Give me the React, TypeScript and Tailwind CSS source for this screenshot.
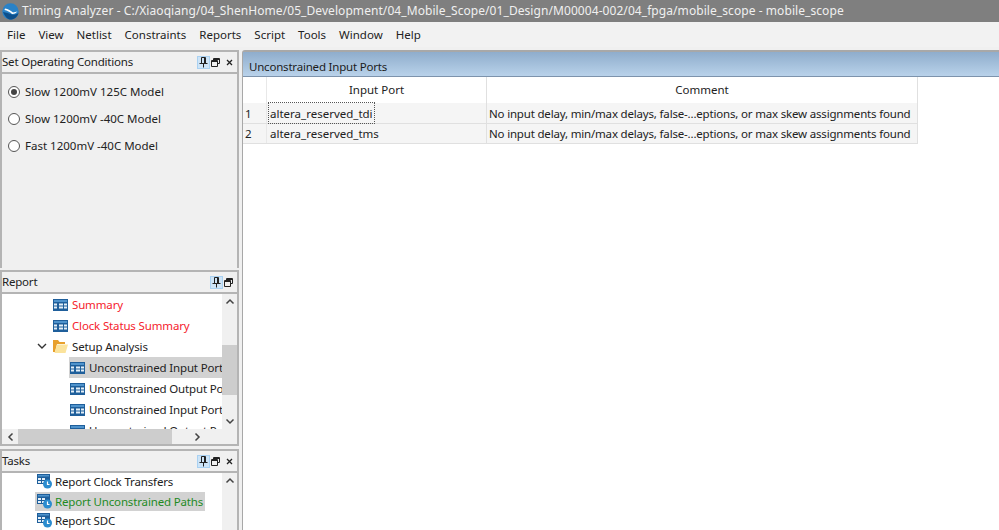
import React from "react";

const font = { fontFamily: '"Noto Sans", Lato, sans-serif' };

function TableIcon() {
  return (
    <svg width="15" height="12" viewBox="0 0 15 12">
      <rect x="0" y="0" width="15" height="12" fill="#1f5f9b" />
      <rect x="1" y="1" width="13" height="2" fill="#4f93cc" />
      {[4.5, 7.5].map((y) =>
        [1, 6, 11].map((x) => <rect key={`${x}-${y}`} x={x} y={y} width={x === 6 ? 4 : 3} height="2" fill="#e4eff8" />)
      )}
    </svg>
  );
}

function TaskIcon() {
  return (
    <svg width="15" height="15" viewBox="0 0 15 15">
      <rect x="0" y="0" width="13" height="10" fill="#1f5f9b" />
      <rect x="1" y="1" width="11" height="1.5" fill="#4f93cc" />
      <rect x="1" y="4" width="3" height="2" fill="#e4eff8" />
      <rect x="5" y="4" width="3" height="2" fill="#e4eff8" />
      <rect x="1" y="7" width="3" height="2" fill="#e4eff8" />
      <rect x="5" y="7" width="3" height="2" fill="#e4eff8" />
      <circle cx="10.5" cy="10" r="4.5" fill="#2b8ccf" />
      <path d="M10.5 7.5V10.5H12.5" stroke="#fff" strokeWidth="1.2" fill="none" />
    </svg>
  );
}

function FolderIcon() {
  return (
    <svg width="15" height="13" viewBox="0 0 15 13">
      <path d="M0 0H5L6.5 2H12V4H4L2 12H0Z" fill="#e8a02c" />
      <path d="M4 4.5H15L12.5 13H1.5Z" fill="#fbe39c" />
    </svg>
  );
}

function PaneButtons({ close = true }: { close?: boolean }) {
  return (
    <div className="flex items-center gap-[1px]">
      <div className="flex h-[13px] w-[13px] items-center justify-center border border-[#a9d1f2] bg-[#cde4f7]">
        <svg width="9" height="11" viewBox="0 0 9 11">
          <path d="M2.5 .5H6.5V6.5H2.5ZM.5 6.5H8.5M4.5 6.5V10.5M5.5 1V6" stroke="#222" strokeWidth="1" fill="none" />
        </svg>
      </div>
      <svg width="9" height="9" viewBox="0 0 9 9">
        <path d="M2.5 2.5V.5H8.5V5.5H6.5M.5 2.5H6.5V8.5H.5Z M2.5 1.5H8 M.5 3.5H6" stroke="#222" strokeWidth="1" fill="none" />
      </svg>
      {close && (
        <svg width="7" height="7" viewBox="0 0 7 7" className="ml-[5px]">
          <path d="M1 1L6 6M6 1L1 6" stroke="#222" strokeWidth="1.3" />
        </svg>
      )}
    </div>
  );
}

function PaneHeader({ title, close = true }: { title: string; close?: boolean }) {
  return (
    <div className="flex h-[22px] shrink-0 items-center justify-between border-b-2 border-[#b4b4b4] bg-[#f0f0f0] pr-[4px]">
      <span className="text-[11.5px] tracking-[-0.2px] text-[#222]">{title}</span>
      <PaneButtons close={close} />
    </div>
  );
}

function Chevron({ d }: { d: string }) {
  return (
    <svg width="10" height="7" viewBox="0 0 10 7">
      <path d={d} stroke="#444" strokeWidth="1.5" fill="none" />
    </svg>
  );
}

function Radio({ label, on = false }: { label: string; on?: boolean }) {
  return (
    <div className="flex h-[27px] items-center gap-[5px] pl-[6px]">
      <div className="flex h-[12px] w-[12px] items-center justify-center rounded-full border border-[#555] bg-white">
        {on && <div className="h-[6px] w-[6px] rounded-full bg-[#444]" />}
      </div>
      <span className="text-[11.5px] text-[#222]">{label}</span>
    </div>
  );
}

function TreeRow({
  label,
  color = "text-[#222]",
  indent,
  icon,
  selected = false,
}: {
  label: string;
  color?: string;
  indent: string;
  icon: React.ReactNode;
  selected?: boolean;
}) {
  return (
    <div className={`flex h-[21px] shrink-0 items-center whitespace-nowrap ${indent}`}>
      <div className={`flex h-[21px] grow items-center gap-[4px] overflow-hidden pl-[1px] ${selected ? "bg-[#d2d2d2]" : ""}`}>
        <span className="flex w-[15px] shrink-0 items-center">{icon}</span>
        <span className={`text-[11.5px] tracking-[-0.15px] ${color}`}>{label}</span>
      </div>
    </div>
  );
}

function TaskRow({ label, color = "text-[#222]", selected = false }: { label: string; color?: string; selected?: boolean }) {
  return (
    <div className="flex h-[19.5px] shrink-0 items-center pl-[33px]">
      <div className={`flex h-[19px] items-center gap-[3px] whitespace-nowrap pl-[2px] pr-[2px] ${selected ? "bg-[#d2d2d2]" : ""}`}>
        <TaskIcon />
        <span className={`text-[11.5px] tracking-[-0.15px] ${color}`}>{label}</span>
      </div>
    </div>
  );
}

function VScrollbar({ children }: { children: React.ReactNode }) {
  return <div className="flex w-[15px] shrink-0 flex-col items-center bg-[#f0f0f0]">{children}</div>;
}

export default function App() {
  return (
    <div style={font} className="flex h-[530px] w-[999px] flex-col overflow-hidden bg-[#f0f0f0]">
      <div className="flex h-[22px] shrink-0 items-center gap-[3px] bg-[#7f7f7f] pl-[2px]">
        <svg width="17" height="17" viewBox="0 0 17 17">
          <circle cx="8.5" cy="8.5" r="8.2" fill="#2a82c7" />
          <path d="M1 9C3 14 6 16.5 8.5 16.5C12.5 16.5 15.5 14 16.5 10C14 11.5 12 12 10 11.5C7 10.5 4 9.5 1 9Z" fill="#0d4f8b" />
          <path d="M3 5.5C6 6 9 7.5 11 9.6L15.5 8.6C13.5 10.6 11.5 11.4 10 11C8 9 5 7.5 2.5 7Z" fill="#fff" />
        </svg>
        <span className="text-[12px] tracking-[0.07px] text-[#f0f0f0]">
          Timing Analyzer - C:/Xiaoqiang/04_ShenHome/05_Development/04_Mobile_Scope/01_Design/M00004-002/04_fpga/mobile_scope - mobile_scope
        </span>
      </div>

      <div className="flex h-[25px] shrink-0 items-center gap-[13px] bg-[#f2f2f2] pl-[7px] text-[11.5px] text-[#222]">
        {["File", "View", "Netlist", "Constraints", "Reports", "Script", "Tools", "Window", "Help"].map((m) => (
          <span key={m}>{m}</span>
        ))}
      </div>

      <div className="flex min-h-0 grow gap-[3px] pt-[3px]">
        <div className="flex w-[239px] shrink-0 flex-col gap-[2px]">
          <div className="flex h-[218px] shrink-0 flex-col border-2 border-b-0 border-[#b4b4b4]">
            <PaneHeader title="Set Operating Conditions" />
            <div className="grow bg-[#f0f0f0] pt-[4px]">
              <Radio label="Slow 1200mV 125C Model" on />
              <Radio label="Slow 1200mV -40C Model" />
              <Radio label="Fast 1200mV -40C Model" />
            </div>
          </div>

          <div className="flex h-[176px] shrink-0 flex-col border-2 border-[#b4b4b4]">
            <PaneHeader title="Report" close={false} />
            <div className="flex min-h-0 grow bg-white">
              <div className="flex min-w-0 grow flex-col overflow-hidden">
                <TreeRow indent="pl-[50px]" label="Summary" color="text-[#f5222d]" icon={<TableIcon />} />
                <TreeRow indent="pl-[50px]" label="Clock Status Summary" color="text-[#f5222d]" icon={<TableIcon />} />
                <div className="flex h-[21px] shrink-0 items-center pl-[35px]">
                  <svg width="10" height="7" viewBox="0 0 10 7" className="mr-[6px]">
                    <path d="M1 1L5 5L9 1" stroke="#333" strokeWidth="1.4" fill="none" />
                  </svg>
                  <div className="flex items-center gap-[4px]">
                    <FolderIcon />
                    <span className="text-[11.5px] tracking-[-0.15px] text-[#222]">Setup Analysis</span>
                  </div>
                </div>
                <TreeRow indent="pl-[67px]" label="Unconstrained Input Ports" icon={<TableIcon />} selected />
                <TreeRow indent="pl-[67px]" label="Unconstrained Output Ports" icon={<TableIcon />} />
                <TreeRow indent="pl-[67px]" label="Unconstrained Input Ports" icon={<TableIcon />} />
                <TreeRow indent="pl-[67px]" label="Unconstrained Output Ports" icon={<TableIcon />} />
              </div>
              <VScrollbar>
                <div className="flex h-[15px] shrink-0 items-center justify-center">
                  <Chevron d="M1.5 5.5L5 2L8.5 5.5" />
                </div>
                <div className="mt-[36px] h-[50px] w-full shrink-0 bg-[#cdcdcd]" />
                <div className="grow" />
                <div className="flex h-[15px] shrink-0 items-center justify-center">
                  <Chevron d="M1.5 1.5L5 5L8.5 1.5" />
                </div>
              </VScrollbar>
            </div>
            <div className="flex h-[15px] shrink-0 items-center bg-[#f0f0f0]">
              <div className="flex w-[16px] items-center justify-center">
                <svg width="7" height="10" viewBox="0 0 7 10">
                  <path d="M5.5 1.5L2 5L5.5 8.5" stroke="#444" strokeWidth="1.5" fill="none" />
                </svg>
              </div>
              <div className="h-full w-[154px] bg-[#cdcdcd]" />
              <div className="flex grow items-center justify-center pr-[14px]">
                <svg width="7" height="10" viewBox="0 0 7 10">
                  <path d="M1.5 1.5L5 5L1.5 8.5" stroke="#444" strokeWidth="1.5" fill="none" />
                </svg>
              </div>
            </div>
          </div>

          <div className="mt-[1px] flex min-h-0 grow flex-col border-2 border-b-0 border-[#b4b4b4]">
            <PaneHeader title="Tasks" />
            <div className="flex min-h-0 grow bg-white">
              <div className="-mt-[1px] flex min-w-0 grow flex-col overflow-hidden">
                <TaskRow label="Report Clock Transfers" />
                <TaskRow label="Report Unconstrained Paths" color="text-[#1f8a1f]" selected />
                <TaskRow label="Report SDC" />
              </div>
              <VScrollbar>
                <div className="flex h-[15px] shrink-0 items-center justify-center">
                  <Chevron d="M1.5 5.5L5 2L8.5 5.5" />
                </div>
              </VScrollbar>
            </div>
          </div>
        </div>

        <div className="flex min-w-0 grow flex-col rounded-tl-[3px] border-l border-t-2 border-[#a8a8a8] bg-white">
          <div className="flex h-[25px] shrink-0 items-center border-b border-[#7d93ac] bg-gradient-to-b from-[#8fadcc] to-[#b9d2ea] pl-[6px] pt-[5px] text-[11.5px] tracking-[-0.2px] text-[#1c1c1c]">
            Unconstrained Input Ports
          </div>
          <div className="w-[675px] text-[11.5px] text-[#222]">
            <div className="flex h-[26px]">
              <div className="w-[24px] shrink-0 border-r border-[#e8e8e8]" />
              <div className="flex w-[220px] shrink-0 items-center justify-center border-r border-[#e0e0e0]">Input Port</div>
              <div className="flex grow items-center justify-center border-r border-[#e0e0e0]">Comment</div>
            </div>
            {[
              ["1", "altera_reserved_tdi", true],
              ["2", "altera_reserved_tms", false],
            ].map(([n, port, focus]) => (
              <div key={n as string} className="flex h-[20.5px] items-center border-b border-[#e0e0e0] bg-[#f5f5f5] first-of-type:bg-white">
                <div className="flex h-full w-[24px] shrink-0 items-center border-r border-[#e8e8e8] bg-[#f5f5f5] pl-[2px] pt-[1px]">{n}</div>
                <div className="flex h-full w-[220px] shrink-0 items-center border-r border-[#e0e0e0] pl-[2px]">
                  <span className={`flex h-full items-center px-[1px] pt-[1px] ${focus ? "outline-1 outline-dotted outline-[#555]" : ""}`}>{port}</span>
                </div>
                <div className="flex h-full grow items-center whitespace-nowrap border-r border-[#e0e0e0] pl-[2px] pt-[1px] tracking-[-0.18px]">
                  No input delay, min/max delays, false-...eptions, or max skew assignments found
                </div>
              </div>
            ))}
          </div>
        </div>
      </div>
    </div>
  );
}
